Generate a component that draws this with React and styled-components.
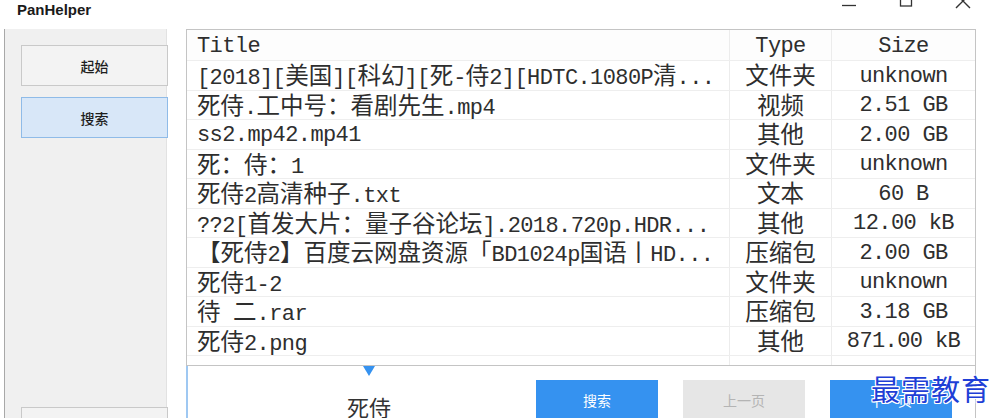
import React from "react";
import styled, { createGlobalStyle } from "styled-components";

const Global = createGlobalStyle`
  html, body { margin: 0; padding: 0; background: #ffffff; }
  body { width: 995px; height: 418px; overflow: hidden; font-family: "Liberation Sans", "Noto Sans CJK SC", sans-serif; }
  #root { width: 995px; height: 418px; }
`;

const Window = styled.div`
  position: relative;
  width: 995px;
  height: 418px;
  display: flex;
  flex-direction: column;
  background: #fff;
  overflow: hidden;
`;

const TitleBar = styled.div`
  height: 29px;
  flex: none;
  display: flex;
  align-items: flex-start;
  padding-left: 17px;
`;

const AppName = styled.div`
  font-family: "Liberation Sans", "Noto Sans CJK SC", sans-serif;
  font-weight: 700;
  font-size: 15px;
  line-height: 17px;
  color: #1a1a1a;
  margin-top: 1px;
`;

const Controls = styled.div`
  margin-left: auto;
  display: flex;
  align-items: flex-start;
  gap: 41px;
  padding-right: 24px;
  margin-top: -5px;
`;

const Ctl = styled.svg`
  width: 16px;
  height: 16px;
  display: block;
`;

const Body = styled.div`
  flex: 1;
  display: flex;
  min-height: 0;
`;

const Sidebar = styled.div`
  margin-left: 4px;
  width: 163px;
  flex: none;
  background: #f0f0f0;
  border-left: 1px solid #a8a8a8;
  border-right: 1px solid #e2e2e2;
  display: flex;
  flex-direction: column;
  padding: 16px 0 0 16px;
  box-sizing: border-box;
  gap: 11px;
`;

const NavButton = styled.div`
  height: 41px;
  width: 147px;
  flex: none;
  box-sizing: border-box;
  display: flex;
  align-items: center;
  justify-content: center;
  font-family: "Noto Sans CJK SC", sans-serif;
  font-size: 14px;
  font-weight: 500;
  color: #1e1e1e;
  background: ${(p) => (p.$active ? "#d8e7f8" : "#f3f3f3")};
  border: 1px solid ${(p) => (p.$active ? "#8fbbe8" : "#c9c9c9")};
  margin-top: ${(p) => (p.$bottom ? "auto" : "0")};
  margin-bottom: ${(p) => (p.$bottom ? "-30px" : "0")};
`;

const Main = styled.div`
  margin-left: 19px;
  width: 790px;
  flex: none;
  display: flex;
  flex-direction: column;
`;

const Table = styled.div`
  height: 337px;
  flex: none;
  border: 1px solid #c4c4c4;
  box-sizing: border-box;
  overflow: hidden;
  background: #fff;
`;

const Row = styled.div`
  display: grid;
  grid-template-columns: 543px 102px 1fr;
  height: ${(p) => (p.$head ? "31px" : "29.5px")};
  border-bottom: 1px solid #eeeeee;
  box-sizing: border-box;
  background: ${(p) => (p.$head ? "#fdfdfd" : "#fff")};
`;

const Cell = styled.div`
  display: flex;
  align-items: center;
  justify-content: ${(p) => (p.$center ? "center" : "flex-start")};
  padding-left: ${(p) => (p.$center ? "0" : "10px")};
  padding-top: 3px;
  border-right: ${(p) => (p.$last ? "none" : "1px solid #ececec")};
  white-space: pre;
  overflow: hidden;
  font-family: "Liberation Mono", "Noto Sans CJK SC", monospace;
  font-size: 22px;
  letter-spacing: -0.6px;
  line-height: 24px;
  color: #2e2e2e;
`;

const CellText = styled.span`
  display: block;
  white-space: pre;
`;

const Han = styled.span`
  font-family: "Noto Sans CJK SC", sans-serif;
  font-size: 23.5px;
  letter-spacing: 0;
  line-height: 24px;
  vertical-align: 0;
`;

const Bottom = styled.div`
  flex: 1;
  display: flex;
  border-left: 2px solid #9fc8f2;
  border-right: 1px solid #c4c4c4;
  box-sizing: border-box;
  background: #fff;
`;

const Query = styled.div`
  width: 348px;
  flex: none;
  padding-left: 14px;
  box-sizing: border-box;
  display: flex;
  flex-direction: column;
  align-items: center;
`;

const Caret = styled.div`
  width: 0;
  height: 0;
  border-left: 6px solid transparent;
  border-right: 6px solid transparent;
  border-top: 10px solid #3592f0;
`;

const QueryText = styled.div`
  font-family: "Noto Sans CJK SC", sans-serif;
  font-size: 22px;
  line-height: 28px;
  color: #333;
  margin-top: 16px;
`;

const Actions = styled.div`
  display: flex;
  gap: 25px;
  padding-top: 14px;
`;

const ActionButton = styled.div`
  width: 122px;
  height: 42px;
  box-sizing: border-box;
  display: flex;
  align-items: center;
  justify-content: center;
  font-family: "Noto Sans CJK SC", sans-serif;
  font-size: 14px;
  padding-bottom: 3px;
  background: ${(p) => (p.$disabled ? "#e6e6e6" : "#3592f0")};
  color: ${(p) => (p.$disabled ? "#b4b4b4" : "#ffffff")};
`;

const Watermark = styled.div`
  position: absolute;
  left: 871px;
  top: 367px;
  font-family: "Noto Sans CJK SC", serif;
  font-size: 29px;
  font-weight: 400;
  letter-spacing: 1px;
  color: #1f3fd6;
  text-shadow: 1px 0 0 #fff, -1px 0 0 #fff, 0 1px 0 #fff, 0 -1px 0 #fff, 1px 1px 0 #fff, -1px -1px 0 #fff, 1px -1px 0 #fff, -1px 1px 0 #fff;
`;

const wideRe = /[\u2E80-\u9FFF\u3000-\u303F\uFF00-\uFFEF]/;

function Mixed({ text }) {
  const parts = [];
  let buf = "";
  let wide = null;
  for (const ch of text) {
    const w = wideRe.test(ch);
    if (wide === null || w === wide) {
      buf += ch;
    } else {
      parts.push({ w: wide, t: buf });
      buf = ch;
    }
    wide = w;
  }
  if (buf) parts.push({ w: wide, t: buf });
  return (
    <CellText>
      {parts.map((p, i) => (p.w ? <Han key={i}>{p.t}</Han> : <React.Fragment key={i}>{p.t}</React.Fragment>))}
    </CellText>
  );
}

const rows = [
  ["[2018][美国][科幻][死-侍2][HDTC.1080P清...", "文件夹", "unknown"],
  ["死侍.工中号：看剧先生.mp4", "视频", "2.51 GB"],
  ["ss2.mp42.mp41", "其他", "2.00 GB"],
  ["死：侍：1", "文件夹", "unknown"],
  ["死侍2高清种子.txt", "文本", "60 B"],
  ["??2[首发大片：量子谷论坛].2018.720p.HDR...", "其他", "12.00 kB"],
  ["【死侍2】百度云网盘资源「BD1024p国语丨HD...", "压缩包", "2.00 GB"],
  ["死侍1-2", "文件夹", "unknown"],
  ["待 二.rar", "压缩包", "3.18 GB"],
  ["死侍2.png", "其他", "871.00 kB"],
  ["", "", ""],
];

export default function App() {
  return (
    <Window>
      <Global />
      <TitleBar>
        <AppName>PanHelper</AppName>
        <Controls>
          <Ctl viewBox="0 0 16 16">
            <line x1="1" y1="10.5" x2="15" y2="10.5" stroke="#333" strokeWidth="1.3" />
          </Ctl>
          <Ctl viewBox="0 0 16 16">
            <rect x="2.5" y="-2" width="11" height="13" fill="none" stroke="#333" strokeWidth="1.3" />
          </Ctl>
          <Ctl viewBox="0 0 16 16">
            <path d="M1 -1 L15 13 M15 -1 L1 13" stroke="#333" strokeWidth="1.4" fill="none" />
          </Ctl>
        </Controls>
      </TitleBar>
      <Body>
        <Sidebar>
          <NavButton>起始</NavButton>
          <NavButton $active>搜索</NavButton>
          <NavButton $bottom>设置</NavButton>
        </Sidebar>
        <Main>
          <Table>
            <Row $head>
              <Cell><Mixed text="Title" /></Cell>
              <Cell $center><Mixed text="Type" /></Cell>
              <Cell $center $last><Mixed text="Size" /></Cell>
            </Row>
            {rows.map((r, i) => (
              <Row key={i}>
                <Cell><Mixed text={r[0]} /></Cell>
                <Cell $center><Mixed text={r[1]} /></Cell>
                <Cell $center $last><Mixed text={r[2]} /></Cell>
              </Row>
            ))}
          </Table>
          <Bottom>
            <Query>
              <Caret />
              <QueryText>死侍</QueryText>
            </Query>
            <Actions>
              <ActionButton>搜索</ActionButton>
              <ActionButton $disabled>上一页</ActionButton>
              <ActionButton>下一页</ActionButton>
            </Actions>
          </Bottom>
        </Main>
      </Body>
      <Watermark>最需教育</Watermark>
    </Window>
  );
}
